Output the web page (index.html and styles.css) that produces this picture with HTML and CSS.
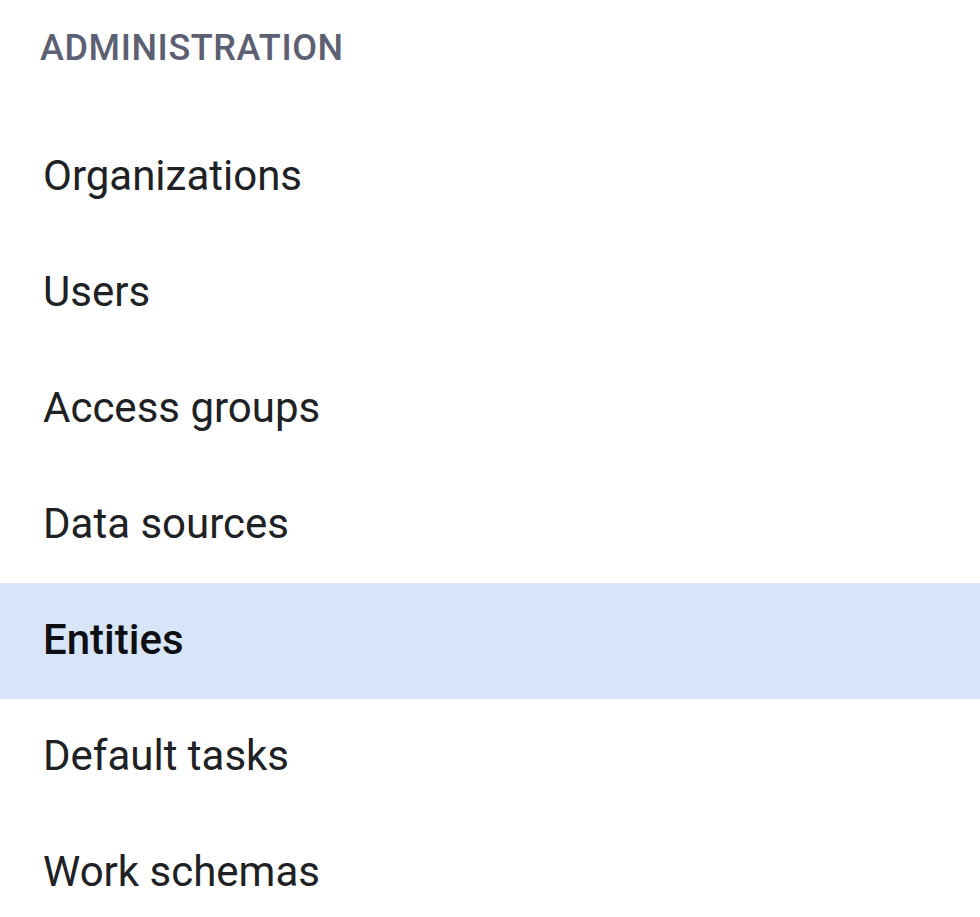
FILE: index.html
```html
<!DOCTYPE html>
<html lang="en">
<head>
  <meta charset="UTF-8" />
  <title>Administration</title>
  <link rel="stylesheet" href="styles.css">
</head>
<body>

<nav id="sideNav">
  <div class="nav-heading">ADMINISTRATION</div>
  <ul class="nav-list">
    <li class="nav-item">Organizations</li>
    <li class="nav-item">Users</li>
    <li class="nav-item">Access groups</li>
    <li class="nav-item">Data sources</li>
    <li class="nav-item active">Entities</li>
    <li class="nav-item">Default tasks</li>
    <li class="nav-item">Work schemas</li>
  </ul>
</nav>

</body>
</html>
```

FILE: styles.css
```css
body, html {
  margin: 0;
  background: #fff;
  font-family: Roboto, "Noto Sans", sans-serif;
  overflow: hidden;
}

#sideNav {
  width: 980px;
}

.nav-heading {
  height: 96px;
  line-height: 96px;
  padding-left: 40px;
  font-size: 36px;
  font-weight: 500;
  letter-spacing: 0.6px;
  color: #5c6072;
}

.nav-list {
  list-style: none;
  margin: 23px 0 0 0;
  padding: 0;
}

.nav-item {
  height: 116px;
  line-height: 114px;
  padding-left: 43px;
  font-size: 42px;
  color: #202124;
}

.nav-item.active {
  background: #d8e5f8;
  font-weight: 500;
  color: #0d0f14;
}
```
